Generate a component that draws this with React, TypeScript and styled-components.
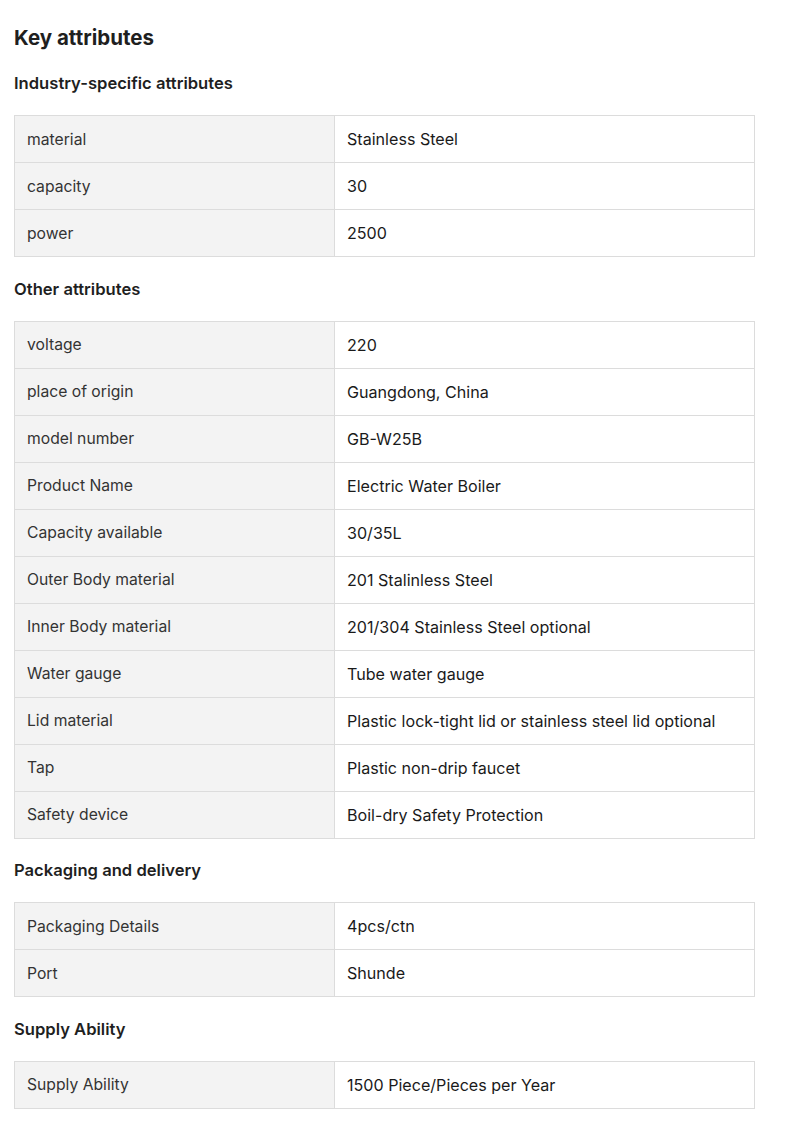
import React from "react";
import styled, { createGlobalStyle } from "styled-components";

type Attr = [string, string];

interface Section {
  title: string;
  rows: Attr[];
}

const sections: Section[] = [
  {
    title: "Industry-specific attributes",
    rows: [
      ["material", "Stainless Steel"],
      ["capacity", "30"],
      ["power", "2500"],
    ],
  },
  {
    title: "Other attributes",
    rows: [
      ["voltage", "220"],
      ["place of origin", "Guangdong, China"],
      ["model number", "GB-W25B"],
      ["Product Name", "Electric Water Boiler"],
      ["Capacity available", "30/35L"],
      ["Outer Body material", "201 Stalinless Steel"],
      ["Inner Body material", "201/304 Stainless Steel optional"],
      ["Water gauge", "Tube water gauge"],
      ["Lid material", "Plastic lock-tight lid or stainless steel lid optional"],
      ["Tap", "Plastic non-drip faucet"],
      ["Safety device", "Boil-dry Safety Protection"],
    ],
  },
  {
    title: "Packaging and delivery",
    rows: [
      ["Packaging Details", "4pcs/ctn"],
      ["Port", "Shunde"],
    ],
  },
  {
    title: "Supply Ability",
    rows: [["Supply Ability", "1500 Piece/Pieces per Year"]],
  },
];

const GlobalStyle = createGlobalStyle`
  body {
    margin: 0;
    background: #fff;
    font-family: Inter, "Noto Sans", "Liberation Sans", sans-serif;
    color: #222;
  }
`;

const Page = styled.div`
  padding: 24px 40px 18px 14px;
  width: 741px;
`;

const Title = styled.h2`
  margin: 0;
  font-size: 20.5px;
  line-height: 28px;
  font-weight: 700;
  color: #1f1f1f;
`;

const SectionTitle = styled.h3<{ $first?: boolean }>`
  margin: ${(p) => (p.$first ? "19px" : "19.5px")} 0 20px;
  font-size: 16.6px;
  line-height: 24px;
  font-weight: 600;
  color: #1f1f1f;
`;

const Table = styled.div`
  display: grid;
  grid-template-columns: 320px 1fr;
  border-top: 1px solid #dcdcdc;
  border-left: 1px solid #dcdcdc;
`;

const Cell = styled.div<{ $label?: boolean }>`
  height: 46px;
  display: flex;
  align-items: center;
  padding: 0 12px;
  border-right: 1px solid #dcdcdc;
  border-bottom: 1px solid #dcdcdc;
  background: ${(p) => (p.$label ? "#f3f3f3" : "#fff")};
  font-size: ${(p) => (p.$label ? "15.7px" : "16.1px")};
  font-weight: 400;
  color: ${(p) => (p.$label ? "#333" : "#1a1a1a")};
  white-space: nowrap;
`;

const App: React.FC = () => {
  return (
    <Page>
      <GlobalStyle />
      <Title>Key attributes</Title>
      {sections.map((s, i) => (
        <React.Fragment key={s.title}>
          <SectionTitle $first={i === 0}>{s.title}</SectionTitle>
          <Table>
            {s.rows.map(([k, v]) => (
              <React.Fragment key={k}>
                <Cell $label>{k}</Cell>
                <Cell>{v}</Cell>
              </React.Fragment>
            ))}
          </Table>
        </React.Fragment>
      ))}
    </Page>
  );
};

export default App;
